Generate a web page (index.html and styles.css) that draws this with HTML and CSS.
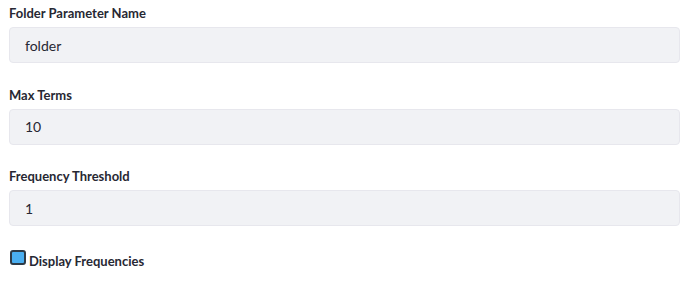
FILE: index.html
```html
<!DOCTYPE html>
<html>
<head>
<meta charset="utf-8">
<link rel="stylesheet" href="styles.css">
</head>
<body>
<form class="form">
  <div class="field">
    <label class="label" for="f1">Folder Parameter Name</label>
    <input class="input" id="f1" type="text" value="folder">
  </div>
  <div class="field">
    <label class="label" for="f2">Max Terms</label>
    <input class="input" id="f2" type="text" value="10">
  </div>
  <div class="field">
    <label class="label" for="f3">Frequency Threshold</label>
    <input class="input" id="f3" type="text" value="1">
  </div>
  <div class="check-row">
    <span class="checkbox"></span>
    <span class="check-label">Display Frequencies</span>
  </div>
</form>
</body>
</html>
```
FILE: styles.css
```css
html, body {
  margin: 0;
  padding: 0;
  background: #ffffff;
}
body {
  font-family: Lato, "Noto Sans", sans-serif;
  color: #272833;
}
.form {
  padding: 5px 8px 0 9px;
  display: flex;
  flex-direction: column;
}
.field {
  display: flex;
  flex-direction: column;
  margin-bottom: 23.5px;
}
.label {
  font-size: 13px;
  font-weight: 700;
  line-height: 16px;
  margin-bottom: 6px;
}
.input {
  box-sizing: border-box;
  height: 36px;
  width: 100%;
  margin: 0;
  padding: 0 15px;
  border: 1px solid #e7e7ed;
  border-radius: 4px;
  background: #f1f2f5;
  font-family: Lato, "Noto Sans", sans-serif;
  font-size: 14px;
  color: #272833;
  outline: none;
}
.check-row {
  display: flex;
  align-items: flex-start;
  gap: 3px;
  padding-left: 1px;
}
.checkbox {
  box-sizing: border-box;
  width: 16px;
  height: 15px;
  border: 2px solid #2e3a46;
  border-radius: 3px;
  background: #4aaef0;
}
.check-label {
  font-size: 13px;
  font-weight: 700;
  line-height: 16px;
  margin-top: 3px;
}
```
